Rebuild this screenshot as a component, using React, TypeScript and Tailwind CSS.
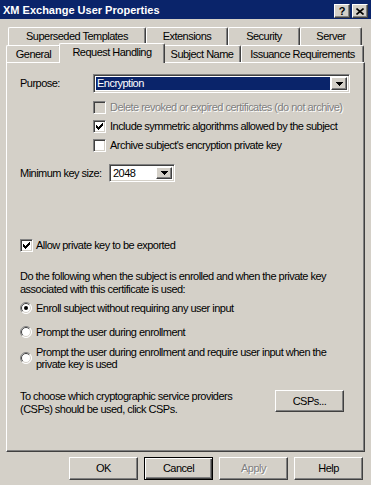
import React from 'react'

const raised =
  'border border-t-white border-l-white border-r-[#404040] border-b-[#404040] shadow-[inset_-1px_-1px_#808080] bg-[#d4d0c8]'
const sunken =
  'border border-t-[#808080] border-l-[#808080] border-r-white border-b-white shadow-[inset_1px_1px_#404040,inset_-1px_-1px_#d4d0c8]'

const checkRows = ['......x', '.....xx', 'x...xxx', 'xx.xxx.', 'xxxxx..', '.xxx...', '..x....']

const CheckMark = () => (
  <svg width="7" height="7" shapeRendering="crispEdges">
    {checkRows.map((row, y) =>
      row.split('').map((c, x) => (c === 'x' ? <rect key={`${x}-${y}`} x={x} y={y} width="1" height="1" fill="#000" /> : null))
    )}
  </svg>
)

const Checkbox = ({ checked, disabled }: { checked?: boolean; disabled?: boolean }) => (
  <div className={`${sunken} w-[13px] h-[13px] shrink-0 flex items-center justify-center ${disabled ? 'bg-[#d4d0c8]' : 'bg-white'}`}>
    {checked && <CheckMark />}
  </div>
)

const Radio = ({ checked }: { checked?: boolean }) => (
  <svg width="12" height="12" className="shrink-0">
    <circle cx="6" cy="6" r="5.5" fill="#fff" />
    <path d="M2.1 9.9 A5.5 5.5 0 0 1 9.9 2.1" stroke="#808080" fill="none" />
    <path d="M9.9 2.1 A5.5 5.5 0 0 1 2.1 9.9" stroke="#fff" fill="none" />
    <path d="M2.8 9.2 A4.5 4.5 0 0 1 9.2 2.8" stroke="#404040" fill="none" />
    <path d="M9.2 2.8 A4.5 4.5 0 0 1 2.8 9.2" stroke="#d4d0c8" fill="none" />
    {checked && <circle cx="6" cy="6" r="2" fill="#000" />}
  </svg>
)

const DropArrow = () => (
  <div className={`${raised} w-[16px] h-full shrink-0 flex items-center justify-center`}>
    <svg width="7" height="4" shapeRendering="crispEdges">
      <path d="M0 0h7v1h-7zM1 1h5v1h-5zM2 2h3v1h-3zM3 3h1v1h-1z" fill="#000" />
    </svg>
  </div>
)

const Tab = ({ label, w, selected }: { label: string; w: string; selected?: boolean }) => (
  <div
    className={`${w} shrink-0 flex items-center justify-center rounded-t-[2px] border-l border-t border-r border-l-white border-t-white border-r-[#404040] shadow-[inset_-1px_0_#808080] bg-[#d4d0c8] ${
      selected ? 'h-[20px] relative top-px z-10 -mx-[2px] pb-[3px]' : 'h-full'
    }`}
  >
    {label}
  </div>
)

const Button = ({ label, disabled, isDefault }: { label: string; disabled?: boolean; isDefault?: boolean }) => (
  <div
    className={`w-[69px] h-[23px] flex items-center justify-center bg-[#d4d0c8] ${
      isDefault
        ? 'border border-black shadow-[inset_1px_1px_#fff,inset_-1px_-1px_#404040,inset_-2px_-2px_#808080]'
        : raised
    } ${disabled ? 'text-[#808080] [text-shadow:1px_1px_#fff]' : ''}`}
  >
    {label}
  </div>
)

export default function App() {
  return (
    <div className="w-[371px] h-[485px] overflow-hidden bg-[#d4d0c8] text-black font-['Liberation_Sans',Arial,sans-serif] text-[11px] leading-[13px] tracking-[-0.52px]">
      {/* title bar */}
      <div className="h-[19px] bg-[#0a246a] flex items-center justify-between pl-[3px] pr-[3px]">
        <span className="text-white font-bold text-[11px] tracking-normal pt-[2px]">XM Exchange User Properties</span>
        <div className="flex gap-[2px] pt-[3px]">
          <div className={`${raised} w-[16px] h-[14px] flex items-center justify-center font-bold text-[11px] tracking-normal`}>?</div>
          <div className={`${raised} w-[16px] h-[14px] flex items-center justify-center`}>
            <svg width="8" height="7">
              <path d="M0.5 0.5L7.5 6.5M7.5 0.5L0.5 6.5" stroke="#000" strokeWidth="1.6" />
            </svg>
          </div>
        </div>
      </div>

      {/* tabs */}
      <div className="px-[6px] pt-[8px]">
        <div className="flex h-[18px] pl-[2px]">
          <Tab label="Superseded Templates" w="w-[138px]" />
          <Tab label="Extensions" w="w-[82px]" />
          <Tab label="Security" w="w-[72px]" />
          <Tab label="Server" w="w-[62px]" />
        </div>
        <div className="flex h-[17px] items-end">
          <Tab label="General" w="w-[55px]" />
          <Tab label="Request Handling" w="w-[106px]" selected />
          <Tab label="Subject Name" w="w-[78px]" />
          <Tab label="Issuance Requirements" w="w-[123px]" />
        </div>

        {/* panel */}
        <div className={`${raised} h-[390px] flex flex-col pl-[13px]`}>
          <div className="mt-[11px] h-[19px] flex items-center">
            <span className="w-[73px] shrink-0">Purpose:</span>
            <div className={`${sunken} bg-white w-[257px] h-full flex items-center p-[2px]`}>
              <div className="flex-1 h-full bg-[#0a246a] text-white pl-[1px] flex items-center mr-px">Encryption</div>
              <DropArrow />
            </div>
          </div>

          <div className="mt-[5px] h-[19px] flex items-center gap-[4px] pl-[73px]">
            <Checkbox disabled />
            <span className="text-[#808080] [text-shadow:1px_1px_#fff]">Delete revoked or expired certificates (do not archive)</span>
          </div>
          <div className="h-[19px] flex items-center gap-[4px] pl-[73px]">
            <Checkbox checked />
            <span>Include symmetric algorithms allowed by the subject</span>
          </div>
          <div className="h-[19px] flex items-center gap-[4px] pl-[73px]">
            <Checkbox />
            <span>Archive subject's encryption private key</span>
          </div>

          <div className="mt-[9px] h-[18px] flex items-center">
            <span className="w-[89px] shrink-0">Minimum key size:</span>
            <div className={`${sunken} bg-white w-[66px] h-full flex items-center p-[2px]`}>
              <div className="flex-1 pl-[1px]">2048</div>
              <DropArrow />
            </div>
          </div>

          <div className="mt-[57px] h-[13px] flex items-center gap-[3px]">
            <Checkbox checked />
            <span>Allow private key to be exported</span>
          </div>

          <p className="mt-[18px]">
            Do the following when the subject is enrolled and when the private key
            <br />
            associated with this certificate is used:
          </p>

          <div className="mt-[5px] h-[14px] flex items-center gap-[4px]">
            <Radio checked />
            <span>Enroll subject without requiring any user input</span>
          </div>
          <div className="mt-[10px] h-[14px] flex items-center gap-[4px]">
            <Radio />
            <span>Prompt the user during enrollment</span>
          </div>
          <div className="mt-[7px] flex items-center gap-[4px] leading-[12px]">
            <Radio />
            <span>
              Prompt the user during enrollment and require user input when the
              <br />
              private key is used
            </span>
          </div>

          <div className="mt-[20px] flex items-start">
            <p className="w-[255px] shrink-0">
              To choose which cryptographic service providers
              <br />
              (CSPs) should be used, click CSPs.
            </p>
            <div className={`${raised} w-[69px] h-[22px] flex items-center justify-center`}>CSPs...</div>
          </div>
        </div>
      </div>

      {/* dialog buttons */}
      <div className="flex gap-[6px] pl-[69px] mt-[5px]">
        <Button label="OK" />
        <Button label="Cancel" isDefault />
        <Button label="Apply" disabled />
        <Button label="Help" />
      </div>
    </div>
  )
}
